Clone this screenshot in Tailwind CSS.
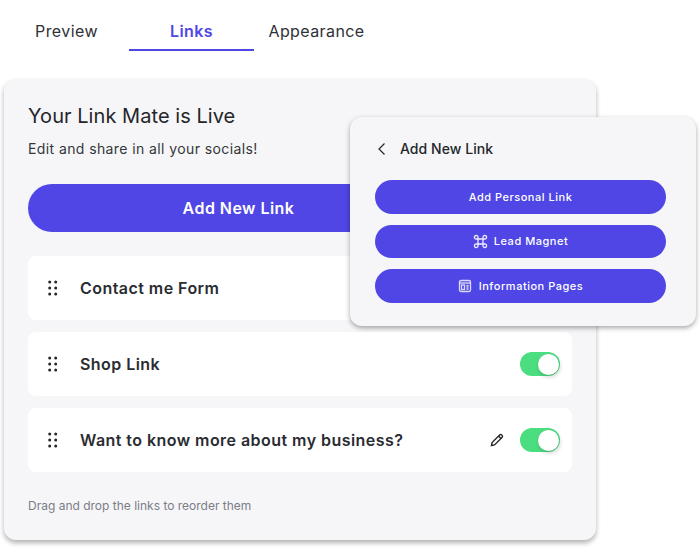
<!DOCTYPE html>
<html lang="en">
<head>
  <meta charset="UTF-8">
  <title>Links</title>
  <script src="https://cdn.jsdelivr.net/npm/@tailwindcss/browser@4"></script>
</head>
<body class="bg-white overflow-hidden font-['Inter',sans-serif] text-[#24262b]">
  <div class="relative w-[700px] h-[548px]">
    <!-- Tabs -->
    <div class="flex ml-1 pt-[12px] w-[375px] text-center text-base tracking-[0.4px]">
      <div class="w-[125px] h-[39px] leading-[38px] text-[#2f3136]">Preview</div>
      <div class="w-[125px] h-[39px] leading-[38px] font-semibold text-[#4f46e5] border-b-2 border-[#4f46e5]">Links</div>
      <div class="w-[125px] h-[39px] leading-[38px] text-[#2f3136]">Appearance</div>
    </div>

    <!-- Main card -->
    <div class="ml-1 mt-[28px] w-[592px] h-[461px] rounded-xl bg-[#f6f6f8] px-6 pt-[22px] shadow-[0_3px_5px_rgba(0,0,0,0.3)]">
      <h1 class="text-xl leading-[30px] font-normal tracking-[0.05px] text-[#24262b]">Your Link Mate is Live</h1>
      <p class="mt-[8px] text-sm leading-5 tracking-[0.4px] text-[#34363b]">Edit and share in all your socials!</p>
      <button class="mt-[25px] w-full h-12 rounded-full bg-[#4f46e5] text-white text-base font-semibold tracking-[0.45px] pr-[123px]">Add New Link</button>

      <div class="mt-6 flex flex-col gap-3">
        <div class="flex items-center h-16 rounded-lg bg-white pl-[20px] pr-3">
          <svg class="w-[10px] h-[16px] shrink-0 fill-[#24262b]" viewBox="0 0 10 16"><circle cx="1.700" cy="2" r="1.500"/><circle cx="7.700" cy="2" r="1.500"/><circle cx="1.700" cy="8" r="1.500"/><circle cx="7.700" cy="8" r="1.500"/><circle cx="1.700" cy="14" r="1.500"/><circle cx="7.700" cy="14" r="1.500"/></svg>
          <span class="ml-[22px] text-base font-semibold tracking-[0.45px] text-[#2a2c31]">Contact me Form</span>
        </div>
        <div class="flex items-center h-16 rounded-lg bg-white pl-[20px] pr-3">
          <svg class="w-[10px] h-[16px] shrink-0 fill-[#24262b]" viewBox="0 0 10 16"><circle cx="1.700" cy="2" r="1.500"/><circle cx="7.700" cy="2" r="1.500"/><circle cx="1.700" cy="8" r="1.500"/><circle cx="7.700" cy="8" r="1.500"/><circle cx="1.700" cy="14" r="1.500"/><circle cx="7.700" cy="14" r="1.500"/></svg>
          <span class="ml-[22px] text-base font-semibold tracking-[0.45px] text-[#2a2c31]">Shop Link</span>
          <div class="ml-auto flex items-center justify-end w-10 h-6 rounded-full bg-[#4ade80] pr-[1px]">
            <div class="w-[21px] h-[21px] rounded-full bg-white shadow-[1px_2px_4px_rgba(0,0,0,0.2)]"></div>
          </div>
        </div>
        <div class="flex items-center h-16 rounded-lg bg-white pl-[20px] pr-3">
          <svg class="w-[10px] h-[16px] shrink-0 fill-[#24262b]" viewBox="0 0 10 16"><circle cx="1.700" cy="2" r="1.500"/><circle cx="7.700" cy="2" r="1.500"/><circle cx="1.700" cy="8" r="1.500"/><circle cx="7.700" cy="8" r="1.500"/><circle cx="1.700" cy="14" r="1.500"/><circle cx="7.700" cy="14" r="1.500"/></svg>
          <span class="ml-[22px] text-base font-semibold tracking-[0.45px] text-[#2a2c31]">Want to know more about my business?</span>
          <svg class="ml-auto w-[14px] h-[14px] fill-none stroke-[#24262b] stroke-[1.4]" viewBox="0 0 14 14"><path d="M1.500 12.500l.6-3L9.600 2a1.500 1.500 0 0 1 2.200 0l.2.2a1.500 1.500 0 0 1 0 2.200L4.500 11.900z"/><path d="M8.500 3.100l2.400 2.400"/></svg>
          <div class="ml-4 flex items-center justify-end w-10 h-6 rounded-full bg-[#4ade80] pr-[1px]">
            <div class="w-[21px] h-[21px] rounded-full bg-white shadow-[1px_2px_4px_rgba(0,0,0,0.2)]"></div>
          </div>
        </div>
      </div>

      <p class="mt-[26px] text-xs leading-4 text-[#7b7d87]">Drag and drop the links to reorder them</p>
    </div>

    <!-- Add new link popup -->
    <div class="absolute left-[350px] top-[117px] w-[346px] h-[209px] rounded-xl bg-[#f6f6f8] pl-[25px] pr-[30px] shadow-[0_2px_5px_rgba(0,0,0,0.35)]">
      <div class="flex items-center h-[63px]">
        <svg class="w-[16px] h-[16px] -ml-[1px] fill-none stroke-[#24262b] stroke-[1.2]" viewBox="0 0 16 16"><path d="M10.500 2.500L5 8l5.500 5.500"/></svg>
        <span class="ml-[10px] text-sm font-medium tracking-[0.05px] text-[#24262b]">Add New Link</span>
      </div>
      <div class="flex flex-col gap-[11px]">
        <button class="flex items-center justify-center h-[33.5px] rounded-full bg-[#4f46e5] text-white text-[11px] font-medium tracking-[0.52px]">Add Personal Link</button>
        <button class="flex items-center justify-center h-[33.5px] rounded-full bg-[#4f46e5] text-white text-[11px] font-medium tracking-[0.52px]">
          <svg class="w-[15px] h-[15px] mr-[6px] fill-none stroke-white/90 stroke-[1.3]" viewBox="0 0 15 15"><path d="M5 5h5v5H5zM5 5H3.300a1.800 1.800 0 1 1 1.700-1.800zM10 5V3.200A1.800 1.800 0 1 1 11.700 5zM5 10v1.800A1.800 1.800 0 1 1 3.300 10zM10 10h1.700a1.800 1.800 0 1 1-1.700 1.800z"/></svg>
          Lead Magnet
        </button>
        <button class="flex items-center justify-center h-[33.5px] rounded-full bg-[#4f46e5] text-white text-[11px] font-medium tracking-[0.52px]">
          <svg class="w-[14px] h-[14px] mr-[7px] fill-none stroke-white/80 stroke-[1.3]" viewBox="0 0 14 14"><rect x="1.500" y="1.500" width="11" height="11" rx="1.500"/><path d="M1.500 4h11"/><rect x="3.500" y="6" width="3" height="4.500"/><path d="M8.500 6.500h2M8.500 8.200h2M8.500 10h2"/></svg>
          Information Pages
        </button>
      </div>
    </div>
  </div>
</body>
</html>
